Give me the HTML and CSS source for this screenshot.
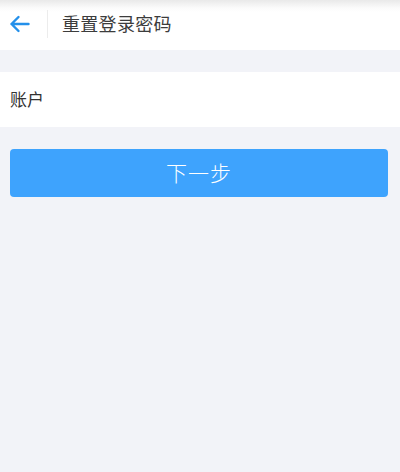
FILE: index.html
```html
<!DOCTYPE html>
<html lang="zh-CN">
<head>
<meta charset="utf-8">
<title>重置登录密码</title>
<link rel="stylesheet" href="styles.css">
</head>
<body>
<header class="header">
  <div class="back">
    <svg class="back-icon" width="24" height="24" viewBox="0 0 24 24" fill="none" stroke="#2490ea" stroke-width="2.4" stroke-linecap="round" stroke-linejoin="round">
      <path d="M20.5 12H3.5M10.5 5L3.5 12L10.5 19"/>
    </svg>
  </div>
  <div class="sep"></div>
  <h1 class="title">重置登录密码</h1>
</header>
<div class="row">
  <span class="label">账户</span>
  <input class="field" type="text" aria-label="账户">
</div>
<button class="next">下一步</button>
</body>
</html>
```
FILE: styles.css
```css
html, body {
  margin: 0;
  padding: 0;
  background: #f2f3f8;
  font-family: "Noto Sans CJK SC", "Noto Sans", sans-serif;
}
.header {
  height: 50px;
  display: flex;
  align-items: center;
  background: linear-gradient(to bottom, #e9e9e9 0px, #fbfbfb 8px, #ffffff 12px);
}
.back {
  width: 40px;
  height: 50px;
  display: flex;
  align-items: center;
  justify-content: center;
}
.back-icon {
  display: block;
  margin-top: -2px;
}
.sep {
  width: 1px;
  height: 28px;
  background: #ececec;
  margin-left: 7px;
  margin-top: -2px;
}
.title {
  margin: -4px 0 0 14px;
  font-size: 18px;
  font-weight: 400;
  color: #3c3c3c;
  letter-spacing: 0.3px;
}
.row {
  margin-top: 22px;
  height: 55px;
  background: #fff;
  display: flex;
  align-items: center;
  padding-left: 10px;
}
.label {
  font-size: 17px;
  color: #333;
  width: 60px;
  margin-top: -3px;
}
.field {
  flex: 1;
  border: none;
  outline: none;
  background: transparent;
  height: 40px;
  font-size: 16px;
}
.next {
  display: block;
  margin: 22px 12px 0 10px;
  width: calc(100% - 22px);
  height: 48px;
  border: none;
  border-radius: 4px;
  background: #3ea3fd;
  color: #fff;
  font-family: "Noto Sans CJK SC", "Noto Sans", sans-serif;
  font-size: 21px;
  font-weight: 300;
  letter-spacing: 1px;
  padding: 0 0 2px;
}
```
